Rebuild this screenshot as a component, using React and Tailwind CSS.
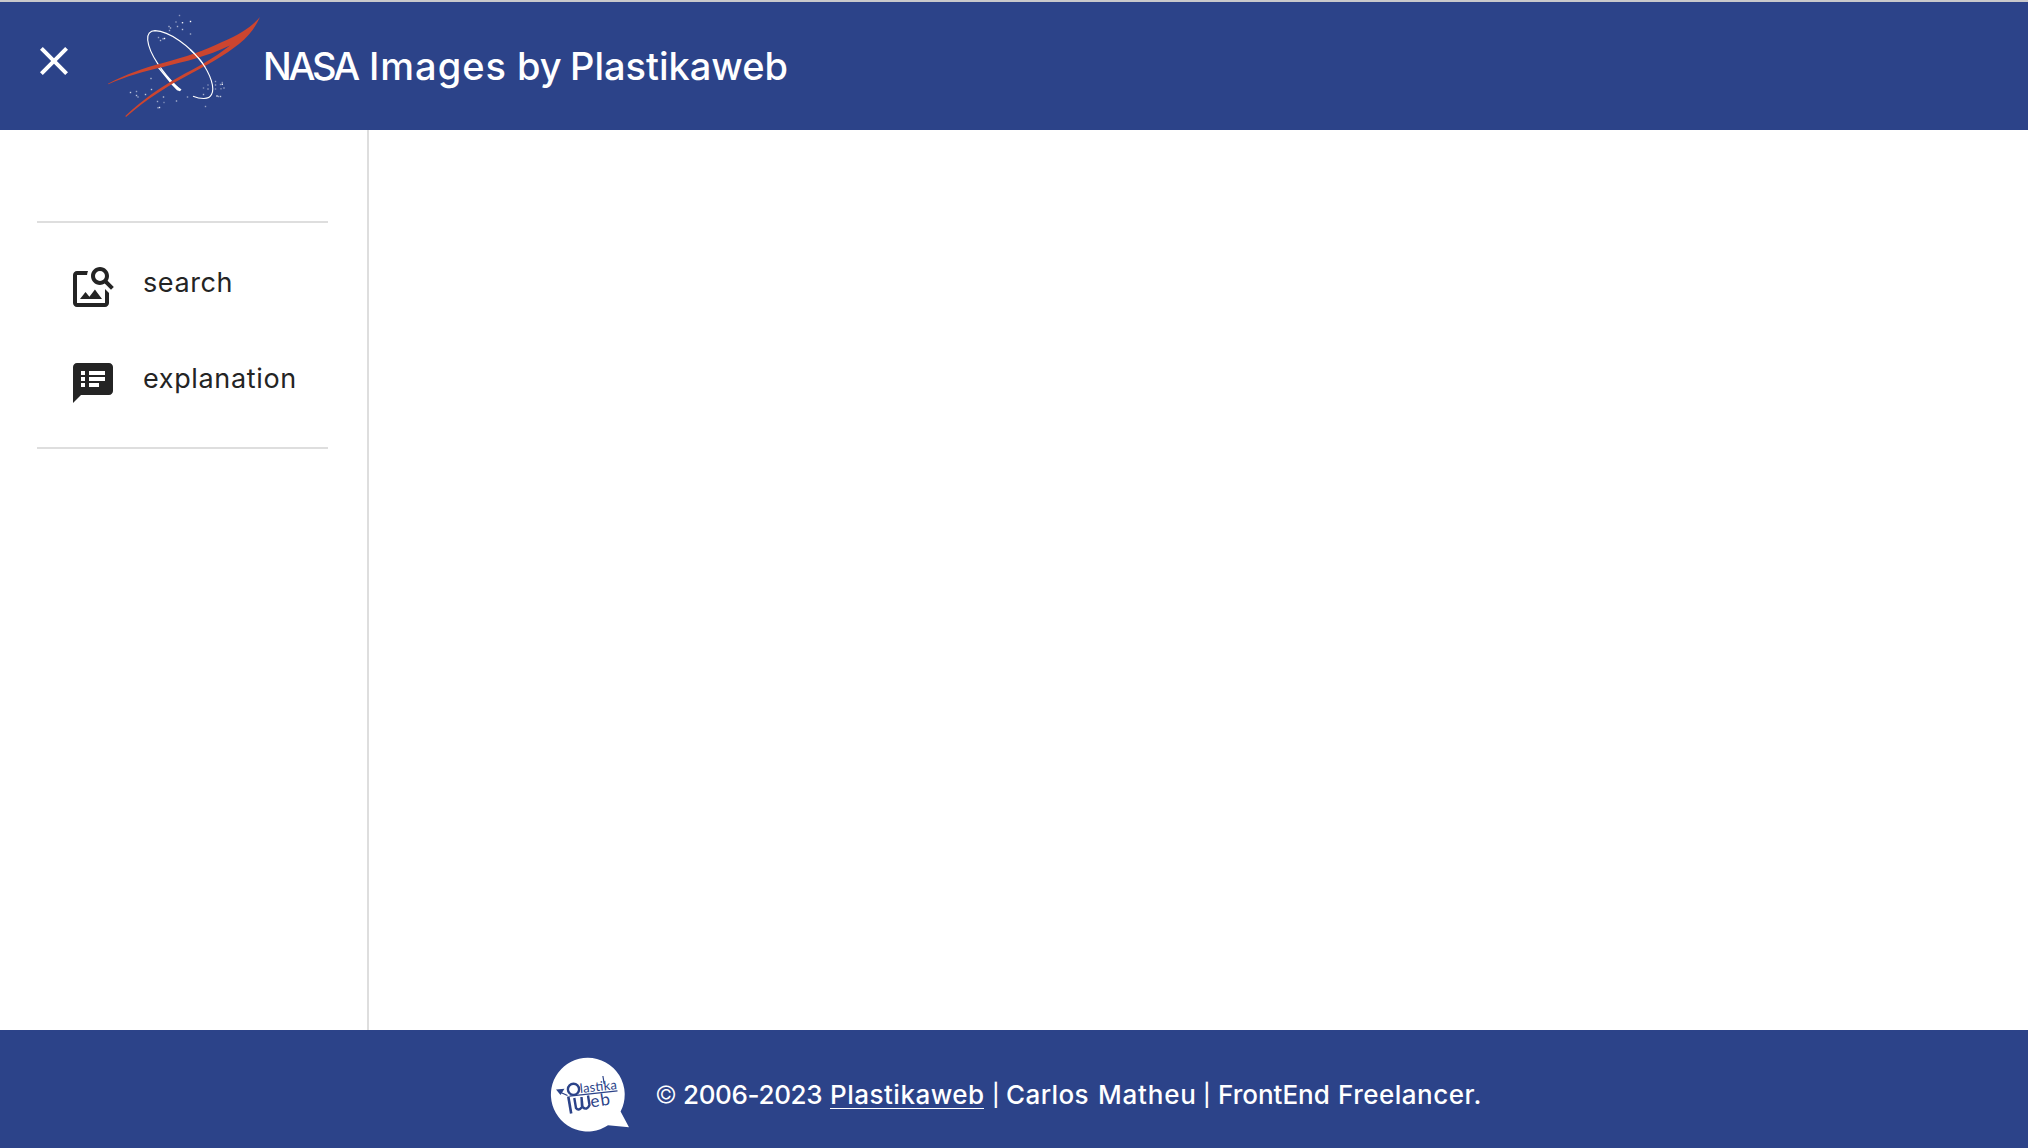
import React from "react";
import { MdClose, MdOutlineImageSearch, MdSpeakerNotes } from "react-icons/md";

const stars = [
  [179.5, 15.5, 0.45], [176, 22, 0.45], [182.5, 22.7, 0.9], [190.5, 21.5, 1], [177.5, 26.5, 0.6],
  [169, 26.5, 0.6], [170.5, 28, 0.6], [169.5, 30.5, 0.5], [182.5, 29.5, 0.7], [190.5, 34, 0.55],
  [158.5, 37.5, 0.5], [160.5, 40.5, 0.6], [164.5, 38.5, 1], [163, 38.8, 0.5], [151, 78.5, 0.6],
  [151.5, 89.5, 0.7], [136.5, 91.5, 0.5], [130.5, 92.5, 0.7], [136.5, 95.5, 0.7], [138, 97, 0.5],
  [145.5, 94.5, 0.7], [157.5, 101.5, 0.55], [163.5, 97, 0.65], [164, 102.5, 0.4], [176.5, 101, 0.6],
  [187.5, 97, 0.5], [159.5, 107.5, 0.9], [158, 107.8, 0.5], [205.5, 106.5, 0.5], [203.5, 88, 0.4],
  [208, 85, 0.4], [208, 89, 0.5], [203.5, 94.5, 0.6], [215.5, 81.5, 0.5], [215.5, 85, 0.5],
  [215.5, 89, 0.4], [217, 96, 0.9], [218.5, 96.5, 0.5], [220.5, 96.5, 0.7], [222.3, 84.3, 0.9],
  [222.3, 82.5, 0.4], [220.5, 84.5, 0.5], [221, 88.8, 0.4], [224, 88, 0.5],
];

function OrbitLogo() {
  return (
    <svg className="ml-[24px] h-[112px] w-[160px] shrink-0" viewBox="102 10 160 112" aria-hidden="true">
      {stars.map(([x, y, o]) => (
        <rect key={`${x}-${y}`} x={x - 0.7} y={y - 0.7} width="1.4" height="1.4" fill="#fff" opacity={o} />
      ))}
      <path
        d="M178 88C163 73 149 54 147.7 40C147 34 150 30.7 155 30.6C170 31 190 47 201 61C211 75 215 88 211.5 94.5C209 100 200 99 193 96.2"
        fill="none" stroke="#fff" strokeWidth="1.15"
      />
      <path d="M158 68L159 67.5L175 84.5L181.5 89.5L180 91.2L177 90.2L171.5 84.5Z" fill="#fff" />
      <path d="M108 83.8C126 74 144 68 162 63.2C187 56.5 203 51 222 42C241 33.5 250 28 260 17C255 28 249 36 239 44C224 56 207 65 192 73C167 86 147 99 126 117L125.3 116C143 99.5 159 88.3 178 77.5C197 67.3 214 58.3 230 45.6C207 56.5 186 61.5 162 67.2C144 71.5 127 75.8 108.3 84.2Z" fill="#cc452f" />
      <path d="M190 49.5C196 55 201.5 61 205 67" fill="none" stroke="#fff" strokeWidth="1.15" />
    </svg>
  );
}

function BubbleLogo() {
  return (
    <svg className="h-[76px] w-[80px] shrink-0" viewBox="550 1057 80 76" aria-hidden="true">
      <path d="M587.6 1057.8A36.8 36.8 0 1 0 608 1125.3L629 1127.3L620.6 1111.5A36.8 36.8 0 0 0 587.6 1057.8Z" fill="#fff" />
      <g fill="none" stroke="#2c4389">
        <circle cx="573.5" cy="1089.3" r="5.6" strokeWidth="2.4" />
        <path d="M567.5 1095.5L562 1093L559 1090.7M569.5 1096.2L617.5 1090.8" strokeWidth="1.3" />
        <path d="M568.3 1096.5L571.2 1113.5" strokeWidth="2.6" />
        <path d="M574.3 1098L576 1108Q578.5 1111.5 582 1107L581.5 1097L582.5 1107Q587 1111 589.5 1105L588 1095.5" strokeWidth="2.4" />
      </g>
      <path d="M556 1089.5L564.5 1088.8L560.5 1095Z" fill="#2c4389" />
      <g fill="#2c4389" fontFamily="Lato, sans-serif">
        <text transform="translate(580.3 1093) rotate(-6)" fontSize="13" textLength="37">lastika</text>
        <text transform="translate(591.3 1107.6) rotate(-9)" fontSize="17" textLength="19.5">eb</text>
      </g>
      <path d="M602.9 1076L604.2 1084" stroke="#2c4389" strokeWidth="1.2" />
    </svg>
  );
}

export default function App() {
  return (
    <div className="flex h-[1148px] w-full flex-col overflow-hidden bg-white font-['Inter',sans-serif] text-[#242424]">
      <header className="flex h-[130px] shrink-0 items-start border-t-2 border-[#c9c9cb] bg-[#2c4389] pl-[30px] text-white">
        <button className="mt-[35px] shrink-0" aria-label="Close menu">
          <MdClose className="size-[48px]" />
        </button>
        <div className="pt-[8px]"><OrbitLogo /></div>
        <h1 className="mt-[36px] flex whitespace-nowrap text-[38px] font-[450] leading-[56px]">
          <span className="w-[106px] pl-[1px] tracking-[-3.2px]">NASA</span>
          <span className="w-[149px] pl-[1px] tracking-[1px]">Images</span>
          <span className="w-[53px]">by</span>
          <span>Plastikaweb</span>
        </h1>
      </header>
      <div className="flex min-h-0 flex-1">
        <aside className="w-[369px] shrink-0 border-r-2 border-[#dedede] pl-[37px] pt-[91px]">
          <nav className="h-[228px] w-[291px] border-y-2 border-[#dedede] pl-[32px] pt-[40px]">
            <a className="flex h-[96px] items-start">
              <MdOutlineImageSearch className="size-[48px] shrink-0" />
              <span className="ml-[26px] text-[27px] leading-[40px] tracking-[0.6px]">search</span>
            </a>
            <a className="flex h-[96px] items-start">
              <MdSpeakerNotes className="size-[48px] shrink-0" />
              <span className="ml-[26px] text-[27px] leading-[40px] tracking-[0.65px]">explanation</span>
            </a>
          </nav>
        </aside>
        <main className="flex-1" />
      </div>
      <footer className="flex h-[118px] shrink-0 items-start bg-[#2c4389] pl-[550px] pt-[27px] text-white">
        <BubbleLogo />
        <p className="ml-[25px] mt-[20px] flex whitespace-nowrap text-[26px] font-medium leading-[36px]">
          <span className="w-[28px] text-[24px] font-light">©</span>
          <span className="w-[147px] tracking-[-0.35px]">2006-2023</span>
          <a className="h-[32px] w-[154px] border-b border-white tracking-[0.5px]">Plastikaweb</a>
          <span className="w-[22px] pl-[8px] text-[22px]">|</span>
          <span className="w-[92px] tracking-[0.4px]">Carlos</span>
          <span className="w-[104px] tracking-[0.8px]">Matheu</span>
          <span className="w-[16px] pl-[1px] text-[22px]">|</span>
          <span className="w-[120px]">FrontEnd</span>
          <span className="tracking-[0.5px]">Freelancer.</span>
        </p>
      </footer>
    </div>
  );
}
